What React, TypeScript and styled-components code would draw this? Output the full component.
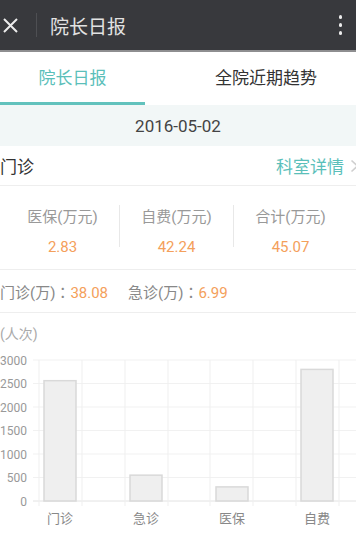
import { Fragment } from "react";
import styled, { createGlobalStyle } from "styled-components";

const GlobalStyle = createGlobalStyle`
  html, body {
    margin: 0;
    padding: 0;
    background: #fff;
  }
  body {
    font-family: Roboto, "Noto Sans CJK SC", sans-serif;
    overflow: hidden;
  }
  * {
    box-sizing: border-box;
  }
`;

const Page = styled.div`
  width: 356px;
  height: 558px;
  overflow: hidden;
  background: #fff;
`;

const TopBar = styled.header`
  height: 52px;
  background: #38393d;
  border-bottom: 2px solid #8e8e90;
  display: flex;
  align-items: center;
  padding-left: 3px;
`;

const BarDivider = styled.span`
  width: 1px;
  height: 24px;
  background: #4e4f53;
  margin-left: 18px;
`;

const Title = styled.h1`
  margin: 0 0 0 13px;
  font-size: 19px;
  font-weight: 400;
  color: #e2e2e2;
`;

const Kebab = styled.div`
  margin-left: auto;
  margin-right: 14px;
  display: flex;
  flex-direction: column;
  gap: 4.5px;
  span {
    width: 3.5px;
    height: 3.5px;
    border-radius: 50%;
    background: #ececec;
  }
`;

const TabBar = styled.nav`
  display: flex;
  height: 53px;
  overflow: hidden;
  background: #fff;
`;

const Tab = styled.div<{ $active?: boolean; $width: number }>`
  flex: 0 0 ${({ $width }) => $width}px;
  display: flex;
  align-items: center;
  justify-content: center;
  padding-bottom: 2px;
  font-size: 17px;
  color: ${({ $active }) => ($active ? "#5bbfba" : "#333")};
  border-bottom: 3px solid
    ${({ $active }) => ($active ? "#62c2bd" : "transparent")};
`;

const DateBar = styled.div`
  height: 41px;
  background: #f2f7f7;
  display: flex;
  align-items: center;
  justify-content: center;
  font-size: 17px;
  color: #444;
`;

const SectionHeader = styled.div`
  height: 40px;
  display: flex;
  align-items: center;
  justify-content: space-between;
  border-bottom: 1px solid #eeeeee;
  font-size: 17px;
  color: #333;
`;

const DetailLink = styled.a`
  display: flex;
  align-items: center;
  gap: 6px;
  color: #5bbfba;
  text-decoration: none;
  margin-right: -3px;
`;

const StatsRow = styled.div`
  height: 84px;
  display: flex;
  padding-left: 6px;
  border-bottom: 1px solid #eeeeee;
`;

const StatColumn = styled.div`
  flex: 0 0 113px;
  padding-top: 20px;
  text-align: center;
`;

const StatLabel = styled.div`
  font-size: 15px;
  line-height: 22px;
  color: #999;
`;

const StatValue = styled.div`
  margin-top: 8px;
  font-size: 15px;
  line-height: 22px;
  color: #f4a05b;
`;

const StatDivider = styled.span`
  flex: 0 0 1px;
  height: 42px;
  margin-top: 19px;
  background: #e8e8e8;
`;

const SummaryRow = styled.div`
  height: 43px;
  display: flex;
  align-items: center;
  gap: 20px;
  border-bottom: 1px solid #eeeeee;
  font-size: 15px;
  color: #888;
`;

const Colon = styled.span`
  font-family: "Noto Sans CJK TC", sans-serif;
`;

const Orange = styled.span`
  color: #f4a05b;
`;

const Unit = styled.div`
  margin-top: 10px;
  font-size: 14px;
  line-height: 22px;
  color: #aaa;
`;

const ChartSvg = styled.svg`
  display: block;
  font-family: Roboto, "Noto Sans CJK SC", sans-serif;
`;

const CloseIcon = () => (
  <svg width="15" height="15" viewBox="0 0 15 15">
    <path d="M1 1 L14 14 M14 1 L1 14" stroke="#ececec" strokeWidth="2" />
  </svg>
);

const Chevron = () => (
  <svg width="9" height="14" viewBox="0 0 9 14">
    <path d="M1.5 1.5 L7.5 7 L1.5 12.5" fill="none" stroke="#cfcfcf" strokeWidth="1.6" />
  </svg>
);

const stats = [
  { label: "医保(万元)", value: "2.83" },
  { label: "自费(万元)", value: "42.24" },
  { label: "合计(万元)", value: "45.07" },
];

const summary = [
  { label: "门诊(万)", value: "38.08" },
  { label: "急诊(万)", value: "6.99" },
];

const bars = [
  { name: "门诊", value: 2560, x: 60 },
  { name: "急诊", value: 550, x: 146 },
  { name: "医保", value: 300, x: 232 },
  { name: "自费", value: 2800, x: 317 },
];

const base = 156;
const perUnit = 141 / 3000;
const gridX = [39, 82, 125, 168, 210, 253, 296, 339];
const ticks = [0, 500, 1000, 1500, 2000, 2500, 3000];

const VisitChart = () => (
  <ChartSvg width="356" height="214" viewBox="0 0 356 214">
    {ticks.map((t) => {
      const y = base - t * perUnit;
      return (
        <g key={t}>
          <line x1="33" x2="356" y1={y} y2={y} stroke={t === 0 ? "#e2e2e2" : "#f1f1f1"} strokeWidth="1" />
          <text x="27" y={y + 4.5} textAnchor="end" fontSize="12" fill="#999">
            {t}
          </text>
        </g>
      );
    })}
    {gridX.map((x) => (
      <line key={x} x1={x} x2={x} y1={base - 3000 * perUnit} y2={base + 5} stroke="#efefef" strokeWidth="1" />
    ))}
    {bars.map((b) => {
      const h = b.value * perUnit;
      return (
        <g key={b.name}>
          <rect x={b.x - 16} y={base - h} width="32" height={h} fill="#efefef" stroke="#d9d9d9" strokeWidth="1.5" />
          <text x={b.x} y="178" textAnchor="middle" fontSize="13" fill="#888">
            {b.name}
          </text>
        </g>
      );
    })}
  </ChartSvg>
);

export default function App() {
  return (
    <>
      <GlobalStyle />
      <Page>
        <TopBar>
          <CloseIcon />
          <BarDivider />
          <Title>院长日报</Title>
          <Kebab>
            <span />
            <span />
            <span />
          </Kebab>
        </TopBar>
        <TabBar>
          <Tab $active $width={145}>
            院长日报
          </Tab>
          <Tab $width={242}>全院近期趋势</Tab>
        </TabBar>
        <DateBar>2016-05-02</DateBar>
        <SectionHeader>
          <span>门诊</span>
          <DetailLink>
            科室详情
            <Chevron />
          </DetailLink>
        </SectionHeader>
        <StatsRow>
          {stats.map((s, i) => (
            <Fragment key={s.label}>
              {i > 0 && <StatDivider />}
              <StatColumn>
                <StatLabel>{s.label}</StatLabel>
                <StatValue>{s.value}</StatValue>
              </StatColumn>
            </Fragment>
          ))}
        </StatsRow>
        <SummaryRow>
          {summary.map((s) => (
            <span key={s.label}>
              {s.label}
              <Colon>：</Colon>
              <Orange>{s.value}</Orange>
            </span>
          ))}
        </SummaryRow>
        <Unit>(人次)</Unit>
        <VisitChart />
      </Page>
    </>
  );
}
